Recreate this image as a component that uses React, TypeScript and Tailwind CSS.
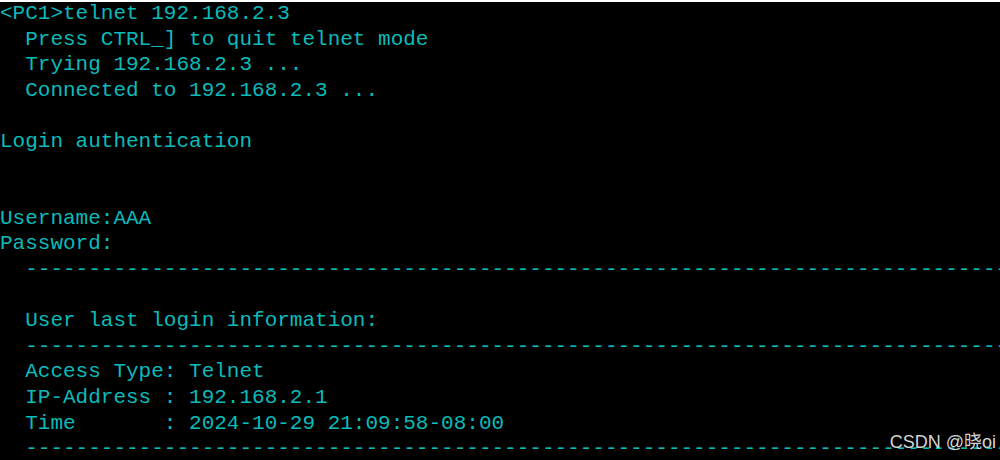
const lines: string[] = [
  "<PC1>telnet 192.168.2.3",
  "  Press CTRL_] to quit telnet mode",
  "  Trying 192.168.2.3 ...",
  "  Connected to 192.168.2.3 ...",
  "",
  "Login authentication",
  "",
  "",
  "Username:AAA",
  "Password:",
  "  " + "-".repeat(90),
  "",
  "  User last login information:",
  "  " + "-".repeat(90),
  "  Access Type: Telnet",
  "  IP-Address : 192.168.2.1",
  "  Time       : 2024-10-29 21:09:58-08:00",
  "  " + "-".repeat(90),
  "  Info",
];

export default function App() {
  return (
    <div className="relative w-[1000px] h-[460px] overflow-hidden bg-black border-t-2 border-white">
      <pre className="-mt-[1px] font-['Liberation_Mono','Courier_New',monospace] text-[21px] leading-[25.6px] text-[#0abbbb] whitespace-pre">
        {lines.map((l, i) => (
          <div key={i} className="h-[25.6px]">
            {l}
          </div>
        ))}
      </pre>
      <div className="absolute right-[4px] bottom-[9px] font-['Liberation_Sans','Noto_Sans_CJK_SC',sans-serif] text-[18px] leading-none text-[#d4d4d4]">
        CSDN @晓oi
      </div>
    </div>
  );
}
